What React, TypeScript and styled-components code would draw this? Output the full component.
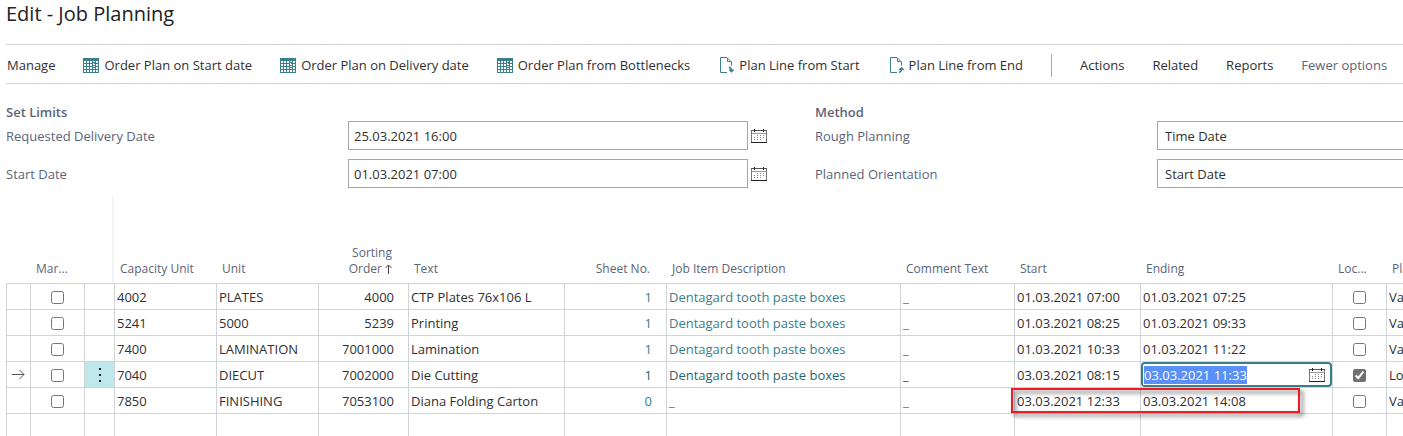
import React, { useEffect, useRef } from "react";
import styled, { createGlobalStyle, css } from "styled-components";

const GlobalStyle = createGlobalStyle`
  * { box-sizing: border-box; }
  body {
    margin: 0;
    background: #fff;
    color: #303030;
    font-family: "Segoe UI", "Open Sans", sans-serif;
    font-size: 13px;
    line-height: 18px;
    overflow: hidden;
  }
  input, select, button { font: inherit; color: inherit; }
`;

const line = "#d0d3d8";
const teal = "#37808a";
const slate = "#5c6478";

const Page = styled.main`
  padding-left: 6px;
  overflow: hidden;
`;

const Title = styled.h1`
  margin: 0;
  height: 44px;
  padding-top: 2px;
  font-size: 20px;
  line-height: 24px;
  font-weight: 500;
  color: #212121;
`;

const Toolbar = styled.nav`
  display: flex;
  align-items: center;
  gap: 28px;
  height: 40px;
  padding: 2px 1px 0;
  border-top: 1px solid ${line};
  border-bottom: 1px solid ${line};
`;

const Action = styled.button<{ $muted?: boolean }>`
  display: flex;
  align-items: center;
  flex: none;
  gap: 5px;
  padding: 0;
  border: 0;
  background: none;
  white-space: nowrap;
  color: ${(p) => (p.$muted ? slate : "#303030")};
  svg { display: block; }
`;

const Divider = styled.span`
  width: 1px;
  height: 23px;
  flex: none;
  background: #a5a9b2;
`;

const Groups = styled.div`
  display: grid;
  grid-template-columns: 809fr 588fr;
  padding-top: 19px;
`;

const Group = styled.section<{ $bleed?: boolean }>`
  min-width: 0;
  ${(p) => (p.$bleed ? css`margin-right: -20px;` : css`padding-right: 48px;`)}
`;

const GroupTitle = styled.h2`
  margin: 0;
  font-size: 13px;
  line-height: 18px;
  font-weight: 600;
  color: ${slate};
`;

const Field = styled.div`
  display: flex;
  align-items: center;
  height: 29px;
  margin-bottom: 9px;
`;

const Label = styled.label`
  flex: 0 0 342px;
  color: ${slate};
`;

const box = css`
  flex: 1;
  min-width: 0;
  height: 29px;
  border: 1px solid #a6a6a6;
  border-radius: 0;
  background: #fff;
  outline: 0;
`;

const TextBox = styled.input`
  ${box}
  padding: 0 5px;
`;

const Choice = styled.select`
  ${box}
  appearance: none;
  padding: 0 7px;
`;

const IconButton = styled.button`
  flex: none;
  width: 16px;
  margin: 0 0 0 3px;
  padding: 0;
  border: 0;
  background: none;
  svg { display: block; }
`;

const Grid = styled.table`
  table-layout: fixed;
  width: 1500px;
  border-collapse: separate;
  border-spacing: 0;
`;

const Head = styled.th<{ $right?: boolean; $frozen?: boolean }>`
  height: 86px;
  padding: 0 ${(p) => (p.$right ? 16 : 0)}px 6px 6px;
  vertical-align: bottom;
  text-align: ${(p) => (p.$right ? "right" : "left")};
  font-size: 12px;
  line-height: 16px;
  font-weight: 400;
  color: ${slate};
  white-space: nowrap;
  ${(p) => p.$frozen && css`border-right: 2px solid #f2f3f4;`}
  svg { vertical-align: -1px; }
`;

const Cell = styled.td<{ $align?: "right" | "center"; $active?: boolean }>`
  position: relative;
  height: 26px;
  padding: 1px ${(p) => (p.$align === "right" ? 14 : 0)}px 0 ${(p) => (p.$align === "center" ? 0 : 2)}px;
  border-left: 1px solid ${line};
  border-top: 1px solid ${line};
  text-align: ${(p) => p.$align ?? "left"};
  white-space: nowrap;
  ${(p) => p.$active && css`background: #bfe8ea;`}
`;

const EditCell = styled(Cell)`
  padding: 0;
`;

const CellLink = styled.a<{ $strong?: boolean }>`
  color: ${(p) => (p.$strong ? "#1f666e" : teal)};
  text-decoration: none;
`;

const Tick = styled.input`
  display: block;
  width: 13px;
  height: 13px;
  margin: 0 auto;
  accent-color: #707070;
`;

const RowMenu = styled.button`
  display: block;
  margin: 0 auto;
  padding: 0;
  border: 0;
  background: none;
  svg { display: block; }
`;

const Editor = styled.div`
  display: flex;
  align-items: center;
  height: 25px;
  padding-right: 5px;
  border: 2px solid ${teal};
  border-radius: 4px;
  background: #fff;
`;

const EditorInput = styled.input`
  flex: 1;
  min-width: 0;
  height: 20px;
  padding: 0 0 0 1px;
  border: 0;
  outline: 0;
  &::selection { background: #5b8ff9; color: #fff; }
`;

const Highlight = styled.span`
  position: absolute;
  z-index: 1;
  top: 0;
  left: -4px;
  width: 289px;
  height: 25px;
  border: 2px solid #ed1c24;
  filter: drop-shadow(3px 3px 2px rgba(0, 0, 0, 0.6));
  pointer-events: none;
`;

const PlanIcon = () => (
  <svg width="16" height="15" viewBox="0 0 16 15" shapeRendering="crispEdges">
    <path fill={teal} d="M0 0h16v15H0z" />
    <path
      fill="#fff"
      d="M1 3h2v2H1zM4 3h2v2H4zM7 3h2v2H7zM10 3h2v1h-2zM13 3h2v2h-2zM1 6h2v2H1zM4 6h2v2H4zM7 6h2v2H7zM10 5h1v2h-1zM11 6h1v1h-1zM13 6h2v2h-2zM10 8h2v1h-2zM1 9h2v2H1zM4 9h2v2H4zM7 9h2v2H7zM10 10h2v1h-2zM13 9h2v2h-2zM1 12h2v2H1zM4 12h2v2H4zM7 12h2v2H7zM10 12h2v2h-2zM13 12h2v2h-2z"
    />
  </svg>
);

const PageIcon = ({ up }: { up?: boolean }) => (
  <svg width="16" height="16" viewBox="0 0 16 16" fill="none" stroke={teal}>
    <path d="M9 15.500H2.500V.5H9L13.500 5V8.500M9.500 1V4.500H13" />
    {up ? (
      <path strokeWidth="1.500" d="M11 15.300Q13.500 15 13.500 11.500M11.300 13L13.500 10.800L15.700 13" />
    ) : (
      <path strokeWidth="1.500" d="M11 10.200Q13.500 10.500 13.500 14M11.300 12.500L13.500 14.700L15.700 12.500" />
    )}
  </svg>
);

const CalendarIcon = () => (
  <svg width="16" height="16" viewBox="0 0 16 16" shapeRendering="crispEdges">
    <path fill="none" stroke="#777" d="M.5 2V15M15.500 2V15" />
    <path stroke="#555" d="M0 2.500h16" />
    <path stroke="#999" d="M1 5.500h14" />
    <path stroke="#222" d="M0 14.500h16M3.500 1v3M12.500 1v3" />
    <path stroke="#888" strokeDasharray="1 2" d="M6 7.500h8M3 9.500h11M3 11.500h8" />
  </svg>
);

const columns = [24, 54, 30, 102, 102, 90, 156, 102, 234, 114, 126, 192, 54, 120];

const rows = [
  { cap: "4002", unit: "PLATES", order: "4000", text: "CTP Plates 76x106 L", sheet: "1", item: "Dentagard tooth paste boxes", start: "01.03.2021 07:00", end: "01.03.2021 07:25", plan: "Variable" },
  { cap: "5241", unit: "5000", order: "5239", text: "Printing", sheet: "1", item: "Dentagard tooth paste boxes", start: "01.03.2021 08:25", end: "01.03.2021 09:33", plan: "Variable" },
  { cap: "7400", unit: "LAMINATION", order: "7001000", text: "Lamination", sheet: "1", item: "Dentagard tooth paste boxes", start: "01.03.2021 10:33", end: "01.03.2021 11:22", plan: "Variable" },
  { cap: "7040", unit: "DIECUT", order: "7002000", text: "Die Cutting", sheet: "1", item: "Dentagard tooth paste boxes", start: "03.03.2021 08:15", end: "03.03.2021 11:33", plan: "Locked", current: true },
  { cap: "7850", unit: "FINISHING", order: "7053100", text: "Diana Folding Carton", sheet: "0", item: "_", start: "03.03.2021 12:33", end: "03.03.2021 14:08", plan: "Variable", flagged: true },
];

const DateField = ({ id, label, value }: { id: string; label: string; value: string }) => (
  <Field>
    <Label htmlFor={id}>{label}</Label>
    <TextBox id={id} defaultValue={value} />
    <IconButton type="button" aria-label={`Choose ${label}`}>
      <CalendarIcon />
    </IconButton>
  </Field>
);

const ChoiceField = ({ id, label, value }: { id: string; label: string; value: string }) => (
  <Field>
    <Label htmlFor={id}>{label}</Label>
    <Choice id={id} defaultValue={value}>
      <option>{value}</option>
    </Choice>
  </Field>
);

export default function App() {
  const editor = useRef<HTMLInputElement>(null);

  useEffect(() => {
    editor.current?.focus({ preventScroll: true });
    editor.current?.select();
  }, []);

  return (
    <>
      <GlobalStyle />
      <Page>
        <Title>Edit - Job Planning</Title>
        <Toolbar>
          <Action>Manage</Action>
          <Action><PlanIcon />Order Plan on Start date</Action>
          <Action><PlanIcon />Order Plan on Delivery date</Action>
          <Action><PlanIcon />Order Plan from Bottlenecks</Action>
          <Action><PageIcon />Plan Line from Start</Action>
          <Action><PageIcon up />Plan Line from End</Action>
          <Divider />
          <Action>Actions</Action>
          <Action>Related</Action>
          <Action>Reports</Action>
          <Action $muted>Fewer options</Action>
        </Toolbar>

        <Groups>
          <Group>
            <GroupTitle>Set Limits</GroupTitle>
            <DateField id="delivery" label="Requested Delivery Date" value="25.03.2021 16:00" />
            <DateField id="start" label="Start Date" value="01.03.2021 07:00" />
          </Group>
          <Group $bleed>
            <GroupTitle>Method</GroupTitle>
            <ChoiceField id="rough" label="Rough Planning" value="Time Date" />
            <ChoiceField id="orientation" label="Planned Orientation" value="Start Date" />
          </Group>
        </Groups>

        <Grid>
          <colgroup>
            {columns.map((w, i) => (
              <col key={i} width={w} />
            ))}
          </colgroup>
          <thead>
            <tr>
              <Head />
              <Head>Mar...</Head>
              <Head $frozen />
              <Head>Capacity Unit</Head>
              <Head>Unit</Head>
              <Head $right>
                Sorting
                <br />
                Order{" "}
                <svg width="7" height="10" viewBox="0 0 7 10" fill="none" stroke="#444">
                  <path d="M3.500 10V1M.5 4L3.500 1L6.500 4" />
                </svg>
              </Head>
              <Head>Text</Head>
              <Head $right>Sheet No.</Head>
              <Head>Job Item Description</Head>
              <Head>Comment Text</Head>
              <Head>Start</Head>
              <Head>Ending</Head>
              <Head>Loc...</Head>
              <Head>Planning</Head>
            </tr>
          </thead>
          <tbody>
            {rows.map((r) => (
              <tr key={r.cap}>
                <Cell $align="center">
                  {r.current && (
                    <svg width="13" height="11" viewBox="0 0 13 11" fill="none" stroke="#555">
                      <path d="M0 5.500H12M7.500 1L12 5.500L7.500 10" />
                    </svg>
                  )}
                </Cell>
                <Cell $align="center">
                  <Tick type="checkbox" aria-label={`Mark ${r.cap}`} />
                </Cell>
                <Cell $align="center" $active={r.current}>
                  {r.current && (
                    <RowMenu type="button" aria-label="Row menu">
                      <svg width="2" height="14" viewBox="0 0 2 14" shapeRendering="crispEdges">
                        <path fill="#222" d="M0 0h2v2H0zM0 6h2v2H0zM0 12h2v2H0z" />
                      </svg>
                    </RowMenu>
                  )}
                </Cell>
                <Cell>{r.cap}</Cell>
                <Cell>{r.unit}</Cell>
                <Cell $align="right">{r.order}</Cell>
                <Cell>{r.text}</Cell>
                <Cell $align="right"><CellLink href="#" $strong={r.current}>{r.sheet}</CellLink></Cell>
                <Cell><CellLink href="#" $strong={r.current}>{r.item}</CellLink></Cell>
                <Cell><CellLink href="#" $strong={r.current}>_</CellLink></Cell>
                <Cell>
                  {r.start}
                  {r.flagged && <Highlight />}
                </Cell>
                {r.current ? (
                  <EditCell>
                    <Editor>
                      <EditorInput ref={editor} aria-label="Ending" defaultValue={r.end} />
                      <IconButton type="button" aria-label="Choose Ending">
                        <CalendarIcon />
                      </IconButton>
                    </Editor>
                  </EditCell>
                ) : (
                  <Cell>{r.end}</Cell>
                )}
                <Cell $align="center">
                  <Tick type="checkbox" defaultChecked={r.current} aria-label={`Lock ${r.cap}`} />
                </Cell>
                <Cell>{r.plan}</Cell>
              </tr>
            ))}
            <tr>
              {columns.map((_, i) => (
                <Cell key={i} />
              ))}
            </tr>
          </tbody>
        </Grid>
      </Page>
    </>
  );
}
